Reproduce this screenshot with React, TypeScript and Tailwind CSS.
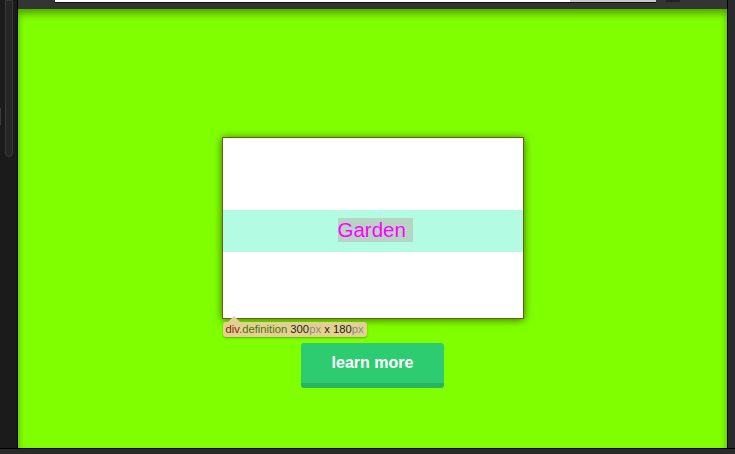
const App = () => {
  return (
    <div className="flex h-[454px] w-[735px] flex-col bg-[#2a2a2a] font-['Liberation_Sans',Arial,sans-serif]">
      <div className="flex flex-1">
        {/* left dock with scrollbar */}
        <div className="relative w-[17px] bg-[#1b1b1b]">
          <div className="absolute left-[5px] top-0 h-[157px] w-[8px] rounded-b-[4px] border border-[#3a3a3a] bg-[#262626]" />
          <div className="absolute left-0 top-[108px] h-[17px] w-px bg-[#3a3a3a]" />
        </div>
        <div className="w-px bg-black" />

        <div className="flex flex-1 flex-col">
          {/* top bar */}
          <div className="flex h-[9px] items-start bg-[#343434]">
            <div className="ml-[37px] flex h-[3px] w-[601px] border-b border-[#111]">
              <div className="w-[515px] bg-white" />
              <div className="flex-1 bg-[#c8c8c8]" />
            </div>
            <div className="ml-[10px] h-[2px] w-[14px] bg-[#222]" />
          </div>

          {/* stage */}
          <div className="flex flex-1 flex-col items-center bg-[#80ff00] pt-[128px] shadow-[inset_0_5px_7px_rgba(0,0,0,0.35)]">
            <div className="relative border border-[#6b5c16] shadow-[0_1px_8px_rgba(0,0,0,0.55)]">
              <div className="flex h-[180px] w-[300px] flex-col bg-white">
                <div className="h-[72px]" />
                <div className="flex h-[42px] justify-center bg-[#b3fce3] pt-[8px]">
                  <span className="ml-[5px] inline-block h-[24px] w-[75px] bg-[#b6d5c7] text-[20.5px] leading-[24px] text-[#ff00ff]">
                    Garden
                  </span>
                </div>
              </div>

              {/* inspector tooltip */}
              <div className="absolute left-0 top-[calc(100%+4px)]">
                <div className="absolute -top-[6px] left-[5px] h-0 w-0 border-x-[6px] border-b-[6px] border-x-transparent border-b-[#e2d190]" />
                <div className="whitespace-nowrap rounded-[3px] bg-[#e2d190] px-[3px] text-[11.25px] leading-[15px] shadow-[0_1px_2px_rgba(0,0,0,0.3)]">
                  <span className="text-[#8b1b16]">div</span>
                  <span className="text-[#4c7412]">.definition</span>
                  <span className="text-[#222]"> 300</span>
                  <span className="text-[#8a8a8a]">px</span>
                  <span className="text-[#222]"> x 180</span>
                  <span className="text-[#8a8a8a]">px</span>
                </div>
              </div>
            </div>

            <button className="mt-[24px] h-[45px] w-[143px] rounded-[3px] border-b-[5px] border-[#28b463] bg-[#2ecc71] text-[16px] font-bold text-white">
              learn more
            </button>
          </div>
        </div>

        <div className="w-px bg-black" />
        <div className="w-[7px] bg-[#2a2a2a]" />
      </div>
      <div className="h-[6px] border-t border-black bg-[#2a2a2a]" />
    </div>
  );
};

export default App;
